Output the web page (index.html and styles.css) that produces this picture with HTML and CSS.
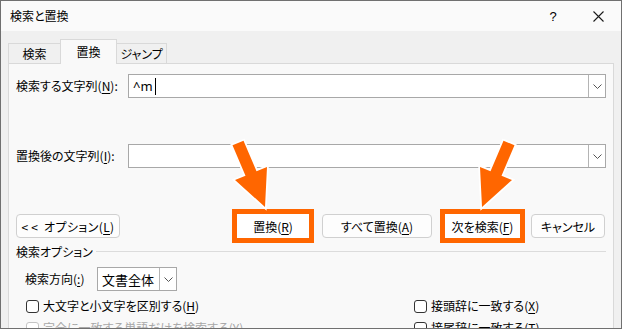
FILE: index.html
```html
<!DOCTYPE html>
<html>
<head>
    <meta charset="utf-8">
    <title>検索と置換</title>
    <link rel="stylesheet" href="styles.css">
</head>
<body>
    <div class="dialog">
        <div class="title-bar">
            <span class="title">検索と置換</span>
            <span class="title-btn help">?</span>
            <span class="title-btn close">
                <svg width="11" height="11" viewBox="0 0 11 11"><path d="M0.5 0.5 L10.5 10.5 M10.5 0.5 L0.5 10.5" stroke="#1a1a1a" stroke-width="1.1" fill="none"/></svg>
            </span>
        </div>

        <div class="tabs">
            <div class="tab">検索</div>
            <div class="tab active">置換</div>
            <div class="tab">ジャンプ</div>
        </div>

        <div class="panel">
            <div class="field-row find">
                <label>検索する文字列(<u>N</u>):</label>
                <div class="combo">
                    <span class="combo-text">^m<span class="caret"></span></span>
                    <span class="combo-btn"><svg width="9" height="5" viewBox="0 0 9 5"><path d="M0.5 0.5 L4.5 4.5 L8.5 0.5" stroke="#555" fill="none"/></svg></span>
                </div>
            </div>

            <div class="field-row replace">
                <label>置換後の文字列(<u>I</u>):</label>
                <div class="combo">
                    <span class="combo-text"></span>
                    <span class="combo-btn"><svg width="9" height="5" viewBox="0 0 9 5"><path d="M0.5 0.5 L4.5 4.5 L8.5 0.5" stroke="#555" fill="none"/></svg></span>
                </div>
            </div>

            <div class="button-row">
                <button class="btn options"><span class="chevrons">&lt;&lt;</span> オプション(<u>L</u>)</button>
                <div class="highlight first"><button class="btn">置換(<u>R</u>)</button></div>
                <button class="btn replace-all">すべて置換(<u>A</u>)</button>
                <div class="highlight second"><button class="btn">次を検索(<u>F</u>)</button></div>
                <button class="btn cancel">キャンセル</button>
            </div>

            <div class="group-title"><span>検索オプション</span></div>

            <div class="direction-row">
                <span class="direction-label">検索方向(<u>:</u>)</span>
                <div class="select">
                    <span class="select-text">文書全体</span>
                    <span class="select-btn"><svg width="9" height="5" viewBox="0 0 9 5"><path d="M0.5 0.5 L4.5 4.5 L8.5 0.5" stroke="#555" fill="none"/></svg></span>
                </div>
            </div>

            <div class="check-grid">
                <div class="check"><span class="box"></span>大文字と小文字を区別する(<u>H</u>)</div>
                <div class="check"><span class="box"></span>接頭辞に一致する(<u>X</u>)</div>
                <div class="check disabled"><span class="box"></span>完全に一致する単語だけを検索する(<u>Y</u>)</div>
                <div class="check"><span class="box"></span>接尾辞に一致する(<u>T</u>)</div>
            </div>
        </div>

        <!-- 注目の矢印 -->
        <svg class="arrows" width="622" height="330" viewBox="0 0 622 330">
            <polygon points="232.5,145.3 243.5,140.7 256.5,171.2 267,167 265,207 235,180 245.5,175.8" />
            <polygon points="514.5,145.3 503.5,140.7 490.5,171.2 480,167 482,207 512,180 501.5,175.8" />
        </svg>
    </div>
</body>
</html>
```

FILE: styles.css
```css
body {
  margin: 0;
  padding: 0;
  background-color: #ffffff;
  font-family: "Noto Sans CJK JP", sans-serif;
  font-size: 12px;
  font-feature-settings: "palt";
  color: #000;
}

u {
  text-decoration-thickness: 1px;
  text-underline-offset: 2px;
}

.dialog {
  position: relative;
  width: 622px;
  height: 329px;
  box-sizing: border-box;
  border: 1px solid #707070;
  background-color: #f0f0f0;
  display: flex;
  flex-direction: column;
  overflow: hidden;
}

.title-bar {
  height: 30px;
  flex: none;
  display: flex;
  align-items: center;
  background-color: #fafafa;
}

.title {
  flex: 1;
  padding-left: 9px;
  line-height: 16px;
}

.title-btn {
  width: 45px;
  height: 30px;
  display: flex;
  align-items: center;
  justify-content: center;
}

.help {
  font-family: "Liberation Sans", sans-serif;
  font-size: 13px;
  width: 46px;
}

.tabs {
  flex: none;
  height: 24px;
  margin: 8px 0 0 7px;
  display: flex;
  align-items: flex-end;
}

.tab {
  box-sizing: border-box;
  height: 20px;
  border: 1px solid #d9d9d9;
  border-bottom: none;
  display: flex;
  align-items: center;
  justify-content: center;
  line-height: 14px;
  background-color: #f0f0f0;
}

.tab:nth-child(1) {
  width: 53px;
}

.tab.active {
  position: relative;
  z-index: 1;
  width: 57px;
  height: 25px;
  margin-left: -1px;
  margin-bottom: -1px;
  padding-bottom: 1px;
  background-color: #f9f9f9;
}

.tab:nth-child(3) {
  width: 51px;
  margin-left: -1px;
}

.panel {
  flex: 1;
  margin: 0 7px;
  padding: 0 7px;
  border: 1px solid #d9d9d9;
  background-color: #f9f9f9;
}

.field-row {
  display: flex;
  align-items: center;
}

.field-row.find {
  margin-top: 10px;
}

.field-row.replace {
  margin-top: 46px;
}

.field-row label {
  width: 112px;
  flex: none;
  line-height: 16px;
}

.combo {
  flex: 1;
  height: 24px;
  box-sizing: border-box;
  border: 1px solid #a8a8a8;
  background-color: #fff;
  display: flex;
}

.combo-text {
  flex: 1;
  padding-left: 4px;
  display: flex;
  align-items: center;
  font-size: 13px;
  font-family: "Noto Sans", sans-serif;
}

.caret {
  display: inline-block;
  width: 1px;
  height: 17px;
  margin-left: 2px;
  background-color: #000;
}

.combo-btn {
  width: 16px;
  border-left: 1px solid #b4b4b4;
  display: flex;
  align-items: center;
  justify-content: center;
}

.button-row {
  margin-top: 41px;
  height: 34px;
  display: flex;
  align-items: center;
  margin-right: 1px;
}

.btn {
  height: 24px;
  box-sizing: border-box;
  padding: 0;
  border: 1px solid #d0d0d0;
  border-radius: 4px;
  background-color: #fdfdfd;
  font-family: inherit;
  font-size: 12px;
  font-feature-settings: "palt";
  color: #000;
}

.options {
  width: 104px;
  letter-spacing: 0.4px;
}

.chevrons {
  letter-spacing: 3px;
}

.highlight {
  border: 5px solid #ff6600;
  height: 24px;
}

.highlight .btn {
  border-color: #fff;
  border-radius: 0;
  background-color: #fff;
}

.highlight.first {
  margin-left: auto;
}

.highlight.first .btn {
  width: 72px;
}

.replace-all {
  width: 110px;
  margin-left: 8px;
}

.highlight.second {
  margin-left: 8px;
}

.highlight.second .btn {
  width: 75px;
}

.cancel {
  width: 74px;
  margin-left: 6px;
}

.group-title {
  margin-top: 1px;
  height: 16px;
  display: flex;
  align-items: center;
  line-height: 16px;
}

.group-title::after {
  content: "";
  flex: 1;
  height: 1px;
  margin-left: 3px;
  margin-top: -2px;
  background-color: #dcdcdc;
}

.direction-row {
  margin-top: 7px;
  padding-left: 9px;
  display: flex;
  align-items: center;
}

.direction-label {
  width: 72px;
  line-height: 16px;
}

.select {
  width: 80px;
  height: 24px;
  box-sizing: border-box;
  border: 1px solid #a8a8a8;
  background-color: #fff;
  display: flex;
}

.select-text {
  flex: 1;
  padding-left: 4px;
  display: flex;
  align-items: center;
  font-size: 13px;
}

.select-btn {
  width: 16px;
  border-left: 1px solid #b4b4b4;
  display: flex;
  align-items: center;
  justify-content: center;
}

.check-grid {
  margin-top: 6px;
  padding-left: 10px;
  display: grid;
  grid-template-columns: 388px 1fr;
  row-gap: 4px;
}

.check {
  height: 18px;
  display: flex;
  align-items: center;
  line-height: 16px;
}

.box {
  width: 13px;
  height: 13px;
  box-sizing: border-box;
  border: 1px solid #333;
  border-radius: 3px;
  background-color: #fff;
  margin-right: 4px;
  flex: none;
}

.check.disabled {
  color: #a8a8a8;
}

.check.disabled .box {
  border-color: #c4c4c4;
}

.arrows {
  position: absolute;
  left: -1px;
  top: -1px;
  pointer-events: none;
}

.arrows polygon {
  fill: #ff6600;
  stroke: #fff;
  stroke-width: 3.5;
  stroke-linejoin: miter;
  paint-order: stroke;
}
```
